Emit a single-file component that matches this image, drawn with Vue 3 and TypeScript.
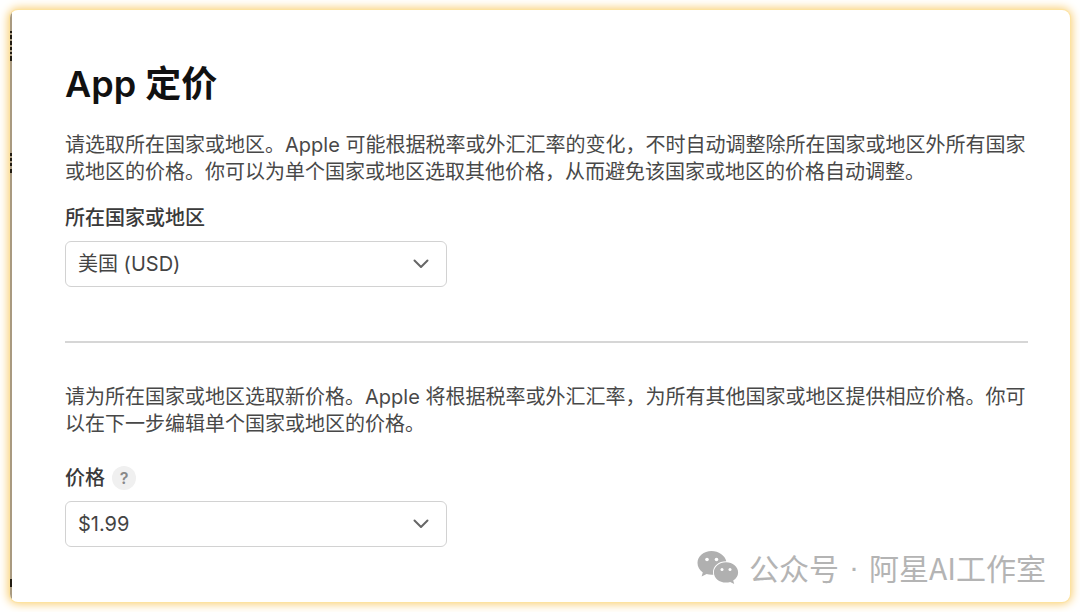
<script setup lang="ts">
import { ref } from 'vue'

const region = ref<string>('美国 (USD)')
const price = ref<string>('$1.99')
const regions: string[] = ['美国 (USD)']
const prices: string[] = ['$1.99']
</script>

<template>
  <div class="page">
    <main class="card">
      <svg class="edge" aria-hidden="true">
        <rect class="edge-line" width="2" height="100%" />
        <path class="edge-marks" d="M0 21h2v2H0z M0 25h2v4H0z M0 31h2v4H0z M0 37h2v3H0z M0 42h2v2H0z M0 46h2v5H0z M0 143h2v3H0z M0 148h2v3H0z M0 153h2v3H0z M0 159h2v4H0z M0 569h2v8H0z" />
      </svg>

      <h1>App 定价</h1>
      <p>请选取所在国家或地区。Apple 可能根据税率或外汇汇率的变化，不时自动调整除所在国家或地区外所有国家或地区的价格。你可以为单个国家或地区选取其他价格，从而避免该国家或地区的价格自动调整。</p>

      <div class="field region">
        <label for="region">所在国家或地区</label>
        <div class="control">
          <select id="region" v-model="region">
            <option v-for="item in regions" :key="item">{{ item }}</option>
          </select>
          <svg class="chevron" viewBox="0 0 16 10" aria-hidden="true"><path d="M1.5 1.5 8 8l6.500-6.500" /></svg>
        </div>
      </div>

      <hr />

      <p>请为所在国家或地区选取新价格。Apple 将根据税率或外汇汇率，为所有其他国家或地区提供相应价格。你可以在下一步编辑单个国家或地区的价格。</p>

      <div class="field price">
        <div class="label-row">
          <label for="price">价格</label>
          <button type="button" class="help">?</button>
        </div>
        <div class="control">
          <select id="price" v-model="price">
            <option v-for="item in prices" :key="item">{{ item }}</option>
          </select>
          <svg class="chevron" viewBox="0 0 16 10" aria-hidden="true"><path d="M1.5 1.5 8 8l6.500-6.500" /></svg>
        </div>
      </div>

      <div class="watermark">
        <svg viewBox="0 0 42 34" aria-hidden="true">
          <path class="bubble" d="M14.500 1C6.700 1 .5 6.200.5 13c0 3.900 2 7.200 5.300 9.400L4.600 26.500l5-2.500c1.600.5 3.200.7 4.900.7h1.800A12 12 0 0 1 16 22.200c0-6.100 5.800-11 13-11h.3C27.800 5.300 21.700 1 14.500 1z" />
          <path class="bubble" d="M29 12.300c-6.800 0-12.100 4.500-12.100 10.100S22.200 32.500 29 32.500c1.500 0 2.900-.2 4.200-.6l4 2-1-3.400c3-1.900 4.900-4.800 4.900-8.100 0-5.600-5.300-10.100-12.100-10.100z" />
          <g class="eyes">
            <circle cx="10" cy="9.500" r="1.800" /><circle cx="19.500" cy="9.500" r="1.800" />
            <circle cx="25" cy="19.500" r="1.500" /><circle cx="33" cy="19.500" r="1.500" />
          </g>
        </svg>
        <span>公众号</span>
        <span class="dot">·</span>
        <span>阿星AI工作室</span>
      </div>
    </main>
  </div>
</template>

<style>
body {
  background: #fff;
}
</style>

<style scoped>
.page {
  box-sizing: border-box;
  display: flex;
  min-height: 100vh;
  padding: 10px;
  font-family: Inter, "Noto Sans CJK SC", sans-serif;
  font-size: 20px;
  color: #484848;
}
.card {
  position: relative;
  box-sizing: border-box;
  flex: 1;
  padding: 48px 42px 48px 55px;
  border-radius: 8px;
  overflow: hidden;
  background: #fff;
  box-shadow: 0 0 0 1px #fde3a0, 0 0 10px 2px #f9cd70;
}
.edge {
  position: absolute;
  top: 0;
  left: 0;
  width: 2px;
  height: 100%;
}
.edge-line {
  fill: #a99a80;
}
.edge-marks {
  fill: #221c12;
}
h1 {
  margin: 0;
  font-size: 36px;
  font-weight: 600;
  line-height: 52px;
  color: #111;
}
p {
  margin: 22px 0 0;
  line-height: 27px;
}
.field {
  display: flex;
  flex-direction: column;
  gap: 9px;
  line-height: 28px;
}
.region {
  margin-top: 18px;
}
.price {
  margin-top: 26px;
}
label {
  font-weight: 500;
  color: #3a3a3a;
}
.label-row {
  display: flex;
  align-items: center;
  gap: 7px;
}
.help {
  width: 24px;
  height: 24px;
  padding: 0;
  border: 0;
  border-radius: 50%;
  background: #f0f0f0;
  color: #888;
  font: 600 16px/24px Inter, sans-serif;
}
.control {
  position: relative;
  width: 100%;
  max-width: 382px;
}
select {
  display: block;
  box-sizing: border-box;
  width: 100%;
  height: 46px;
  padding: 0 44px 0 12px;
  border: 1px solid #d2d2d2;
  border-radius: 6px;
  background: #fff;
  appearance: none;
  font: inherit;
  color: #444;
}
.chevron {
  position: absolute;
  top: 18px;
  right: 18px;
  width: 16px;
  height: 10px;
  fill: none;
  stroke: #666;
  stroke-width: 2;
  stroke-linecap: round;
  stroke-linejoin: round;
  pointer-events: none;
}
hr {
  height: 2px;
  margin: 54px 0 41px;
  border: 0;
  background: #d6d6d6;
}
.watermark {
  position: absolute;
  right: 24px;
  bottom: 14px;
  display: flex;
  align-items: center;
  gap: 10px;
  font: 400 30px/42px "Noto Sans CJK SC", sans-serif;
  color: #b4b4b4;
}
.watermark svg {
  width: 42px;
  height: 34px;
}
.dot {
  font-family: "Liberation Sans", sans-serif;
}
.bubble {
  fill: #b0b0b0;
}
.eyes {
  fill: #fff;
}
</style>
